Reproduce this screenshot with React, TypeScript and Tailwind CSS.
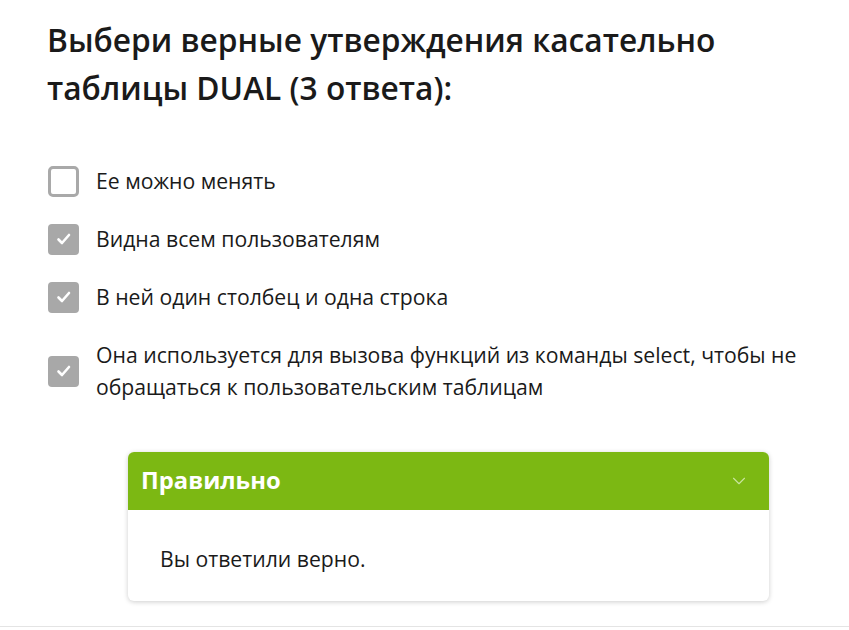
import { ChevronDown } from "lucide-react";

const options = [
  { label: "Ее можно менять", checked: false },
  { label: "Видна всем пользователям", checked: true },
  { label: "В ней один столбец и одна строка", checked: true },
  {
    label:
      "Она используется для вызова функций из команды select, чтобы не обращаться к пользовательским таблицам",
    checked: true,
  },
];

function Checkbox({ checked }: { checked: boolean }) {
  if (!checked) {
    return (
      <span className="block w-[31px] h-[31px] shrink-0 rounded-[5px] border-[3px] border-[#a9a9a9] bg-white" />
    );
  }
  return (
    <span className="flex w-[31px] h-[31px] shrink-0 items-center justify-center rounded-[4px] bg-[#a8a8a8]">
      <svg width="18" height="18" viewBox="0 0 18 18" fill="none">
        <path d="M3.5 9.5l3.5 3.5 7-8" stroke="white" strokeWidth="2.6" strokeLinecap="round" strokeLinejoin="round" />
      </svg>
    </span>
  );
}

export default function App() {
  return (
    <div className="w-[849px] h-[630px] bg-white overflow-hidden" style={{ fontFamily: '"Open Sans", sans-serif' }}>
      <div className="h-[627px] border-b border-[#e4e4e4] pl-[47px] pr-[30px] pt-[16px]">
        <h1 className="text-[31.7px] leading-[48px] font-semibold text-[#1a1a1a] w-[720px]">
          Выбери верные утверждения касательно таблицы DUAL (3 ответа):
        </h1>

        <ul className="mt-[53px] flex flex-col gap-[26px]">
          {options.map((o) => (
            <li key={o.label} className="flex items-center gap-[17px] pl-[1px]">
              <Checkbox checked={o.checked} />
              <span className="text-[21.2px] leading-[32px] text-[#1a1a1a] max-w-[720px]">{o.label}</span>
            </li>
          ))}
        </ul>

        <div className="ml-[81px] mt-[49px] w-[641px] rounded-[6px] bg-white shadow-[0_1px_5px_rgba(0,0,0,0.2)] overflow-hidden">
          <div className="flex h-[58px] items-center justify-between bg-[#7cb813] pl-[13px] pr-[19px]">
            <span className="text-[23.8px] font-bold text-white">Правильно</span>
            <ChevronDown className="w-[22px] h-[22px] text-[#c9e59e]" strokeWidth={1.2} />
          </div>
          <div className="h-[91px] flex items-center pl-[32px] pt-[6px] text-[21.2px] text-[#1a1a1a]">
            Вы ответили верно.
          </div>
        </div>
      </div>
    </div>
  );
}
